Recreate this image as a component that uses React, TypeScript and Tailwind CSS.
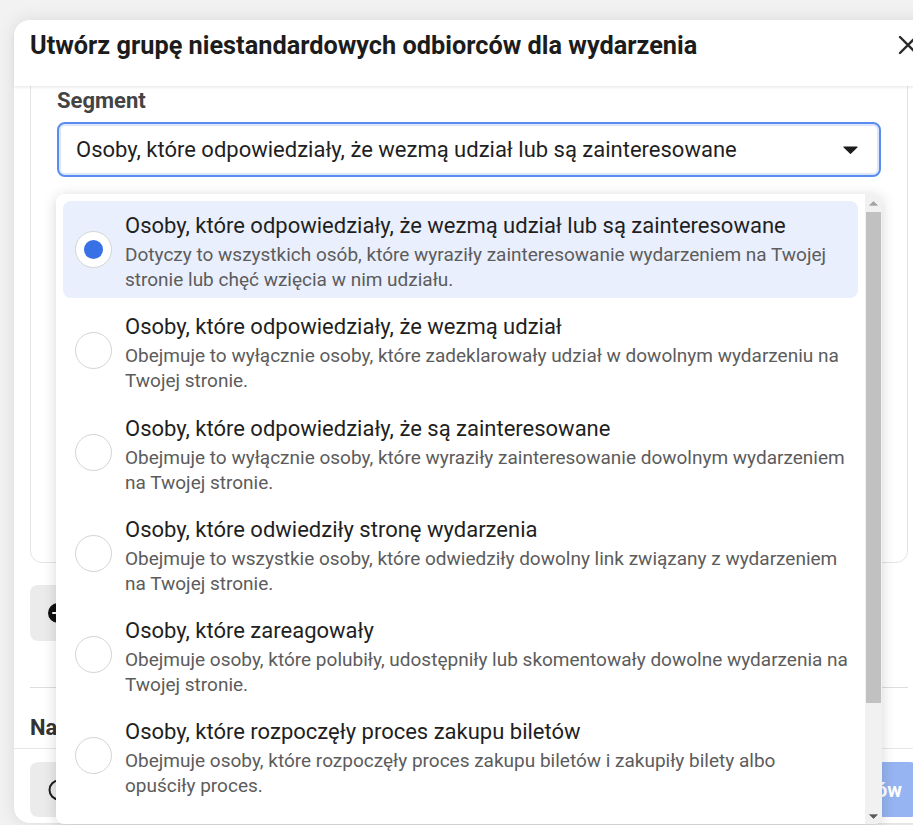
import React from "react";

// each description is kept as its wrapped lines so the menu breaks like the native one
const segments = [
  {
    title: "Osoby, które odpowiedziały, że wezmą udział lub są zainteresowane",
    desc: ["Dotyczy to wszystkich osób, które wyraziły zainteresowanie wydarzeniem na Twojej", "stronie lub chęć wzięcia w nim udziału."],
  },
  {
    title: "Osoby, które odpowiedziały, że wezmą udział",
    desc: ["Obejmuje to wyłącznie osoby, które zadeklarowały udział w dowolnym wydarzeniu na", "Twojej stronie."],
  },
  {
    title: "Osoby, które odpowiedziały, że są zainteresowane",
    desc: ["Obejmuje to wyłącznie osoby, które wyraziły zainteresowanie dowolnym wydarzeniem", "na Twojej stronie."],
  },
  {
    title: "Osoby, które odwiedziły stronę wydarzenia",
    desc: ["Obejmuje to wszystkie osoby, które odwiedziły dowolny link związany z wydarzeniem", "na Twojej stronie."],
  },
  {
    title: "Osoby, które zareagowały",
    desc: ["Obejmuje osoby, które polubiły, udostępniły lub skomentowały dowolne wydarzenia na", "Twojej stronie."],
  },
  {
    title: "Osoby, które rozpoczęły proces zakupu biletów",
    desc: ["Obejmuje osoby, które rozpoczęły proces zakupu biletów i zakupiły bilety albo", "opuściły proces."],
  },
  {
    title: "Osoby, które kupiły bilety",
    desc: ["Obejmuje osoby, które zakupiły bilety na dowolne wydarzenie na Twojej stronie."],
  },
];

function Radio({ checked }: { checked: boolean }) {
  return (
    <div className="flex h-[37px] w-[37px] shrink-0 items-center justify-center rounded-full border border-[#d4d4d4] bg-white">
      {checked && <div className="h-[19px] w-[19px] rounded-full bg-[#3871e6]" />}
    </div>
  );
}

function Caret({ className }: { className?: string }) {
  return (
    <svg width="15" height="8" viewBox="0 0 15 8" className={className}>
      <path d="M1 1h13L7.5 7.3z" fill="currentColor" stroke="currentColor" strokeWidth="1.2" strokeLinejoin="round" />
    </svg>
  );
}

function SegmentMenu() {
  return (
    <div className="absolute left-[56px] top-[194px] z-20 flex h-[630px] w-[826px] overflow-hidden rounded-lg bg-white shadow-[0_2px_14px_rgba(0,0,0,0.16)]">
      <div className="flex flex-1 flex-col gap-[4.3px] overflow-hidden px-[7px] pt-[7px]">
        {segments.map((s, i) => (
          <div
            key={s.title}
            className={`flex h-[97px] shrink-0 items-center rounded-lg pl-[12px] ${i === 0 ? "bg-[#e9effc]" : ""}`}
          >
            <Radio checked={i === 0} />
            <div className="ml-[13px] mt-[3px] w-[726px]">
              <div className="text-[22px] leading-[32px] text-[#1f1f1f]">{s.title}</div>
              {s.desc.map((line) => (
                <div key={line} className="whitespace-nowrap text-[19px] leading-[25px] text-[#5c5c5c]">
                  {line}
                </div>
              ))}
            </div>
          </div>
        ))}
      </div>
      {/* scrollbar */}
      <div className="flex w-[17px] shrink-0 flex-col bg-[#f1f1f1]">
        <div className="flex h-[18px] items-center justify-center text-[#a3a3a3]">
          <Caret className="h-[5px] w-[9px] rotate-180" />
        </div>
        <div className="ml-[1px] h-[491px] w-[15px] bg-[#c1c1c1]" />
        <div className="flex-1" />
        <div className="flex h-[15px] items-center justify-center text-[#5a5a5a]">
          <Caret className="h-[5px] w-[9px]" />
        </div>
      </div>
    </div>
  );
}

export default function App() {
  return (
    <div className="relative h-[825px] w-[913px] overflow-hidden bg-[#f2f2f2] font-['Roboto',sans-serif]">
      <div className="ml-[14px] mt-[20px] w-[926px] rounded-2xl bg-white shadow-[0_0_18px_rgba(0,0,0,0.10)]">
        {/* header */}
        <div className="relative z-10 flex h-[66px] items-start justify-between rounded-t-2xl bg-white pl-4 pr-[22px] pt-[11px] shadow-[0_2px_3px_rgba(0,0,0,0.07)]">
          <h1 className="text-[25.3px] font-bold leading-[30px] text-[#1c1c1c]">Utwórz grupę niestandardowych odbiorców dla wydarzenia</h1>
          <svg width="20" height="20" viewBox="0 0 20 20" className="mt-[4px] text-[#2a2a2a]">
            <path d="M2 2l16 16M18 2L2 18" stroke="currentColor" strokeWidth="2.4" strokeLinecap="round" />
          </svg>
        </div>

        {/* body */}
        <div className="h-[662px] overflow-hidden pl-4 pr-8">
          <div className="-mt-3 h-[489px] rounded-xl border border-[#e4e4e4] px-[26px] pt-[12px]">
            <div className="text-[22px] font-bold leading-[28px] text-[#444]">Segment</div>
            <div className="mt-[7px] flex h-[55px] items-center justify-between rounded-lg border-2 border-[#5a8cef] pl-[17px] pr-[21px] shadow-[inset_0_0_0_2px_#dde7fb]">
              <span className="text-[22px] text-[#1f1f1f]">Osoby, które odpowiedziały, że wezmą udział lub są zainteresowane</span>
              <Caret className="text-[#1c1c1c]" />
            </div>
            <div className="mt-[45px] h-[70px] rounded-lg border border-[#dadada]" />
            <div className="mt-[44px] h-[64px] rounded-lg border border-[#dadada]" />
          </div>

          <button className="mt-[22px] flex h-[56px] items-center gap-3 rounded-lg bg-[#ebebeb] pl-[18px] pr-5">
            <svg width="20" height="20" viewBox="0 0 20 20">
              <circle cx="10" cy="10" r="10" fill="#111" />
              <path d="M10 5v10M5 10h10" stroke="#fff" strokeWidth="2" strokeLinecap="round" />
            </svg>
            <span className="text-[19px] font-bold text-[#1c1c1c]">Dodaj</span>
          </button>

          <div className="mt-[46px] h-px bg-[#dedede]" />
          <div className="mt-[26px] text-[22px] font-bold leading-[28px] text-[#333]">Nazwa</div>
        </div>

        {/* footer */}
        <div className="flex items-center justify-between border-t border-[#e6e6e6] pb-[6px] pl-4 pr-[22px] pt-[13px]">
          <button className="flex h-[55px] items-center gap-3 rounded-lg bg-[#ebebeb] pl-[18px] pr-5">
            <svg width="22" height="22" viewBox="0 0 22 22">
              <circle cx="11" cy="11" r="9.5" fill="none" stroke="#1c1c1c" strokeWidth="2" />
              <path d="M11 10v6M11 6.5v.5" stroke="#1c1c1c" strokeWidth="2" strokeLinecap="round" />
            </svg>
            <span className="text-[19px] font-bold text-[#1c1c1c]">Pomoc</span>
          </button>
          <button className="flex h-[55px] items-center rounded-lg bg-[#95b4f1] px-4">
            <span className="text-[20px] font-bold text-white">Utwórz grupę odbiorców</span>
          </button>
        </div>
      </div>

      <SegmentMenu />
    </div>
  );
}
